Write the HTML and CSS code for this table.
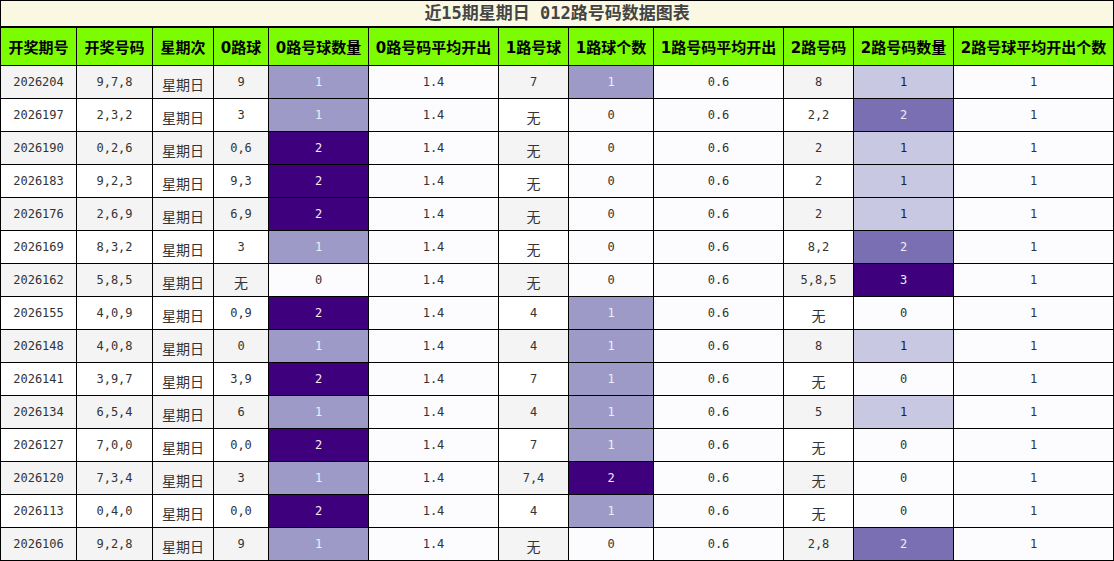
FILE: index.html
```html
<!DOCTYPE html>
<html lang="zh">
<head>
<meta charset="utf-8">
<title>近15期星期日 012路号码数据图表</title>
<link rel="stylesheet" href="styles.css">
</head>
<body>
<table class="chart">
  <colgroup>
    <col class="w76"><col class="w76"><col class="w61"><col class="w55"><col class="w100"><col class="w130"><col class="w70"><col class="w85"><col class="w130"><col class="w70"><col class="w100"><col class="w160">
  </colgroup>
  <thead>
    <tr class="title-row"><th colspan="12" class="title">近15期星期日 012路号码数据图表</th></tr>
    <tr class="head-row">
      <th>开奖期号</th><th>开奖号码</th><th>星期次</th><th>0路球</th><th>0路号球数量</th><th>0路号码平均开出</th><th>1路号球</th><th>1路球个数</th><th>1路号码平均开出</th><th>2路号码</th><th>2路号码数量</th><th>2路号球平均开出个数</th>
    </tr>
  </thead>
  <tbody>
    <tr><td>2026204</td><td>9,7,8</td><td class="cjk">星期日</td><td>9</td><td class="c2">1</td><td class="avg">1.4</td><td>7</td><td class="c2">1</td><td class="avg">0.6</td><td>8</td><td class="c1">1</td><td class="avg">1</td></tr>
    <tr><td>2026197</td><td>2,3,2</td><td class="cjk">星期日</td><td>3</td><td class="c2">1</td><td class="avg">1.4</td><td class="cjk">无</td><td class="avg">0</td><td class="avg">0.6</td><td>2,2</td><td class="c3">2</td><td class="avg">1</td></tr>
    <tr><td>2026190</td><td>0,2,6</td><td class="cjk">星期日</td><td>0,6</td><td class="c4">2</td><td class="avg">1.4</td><td class="cjk">无</td><td class="avg">0</td><td class="avg">0.6</td><td>2</td><td class="c1">1</td><td class="avg">1</td></tr>
    <tr><td>2026183</td><td>9,2,3</td><td class="cjk">星期日</td><td>9,3</td><td class="c4">2</td><td class="avg">1.4</td><td class="cjk">无</td><td class="avg">0</td><td class="avg">0.6</td><td>2</td><td class="c1">1</td><td class="avg">1</td></tr>
    <tr><td>2026176</td><td>2,6,9</td><td class="cjk">星期日</td><td>6,9</td><td class="c4">2</td><td class="avg">1.4</td><td class="cjk">无</td><td class="avg">0</td><td class="avg">0.6</td><td>2</td><td class="c1">1</td><td class="avg">1</td></tr>
    <tr><td>2026169</td><td>8,3,2</td><td class="cjk">星期日</td><td>3</td><td class="c2">1</td><td class="avg">1.4</td><td class="cjk">无</td><td class="avg">0</td><td class="avg">0.6</td><td>8,2</td><td class="c3">2</td><td class="avg">1</td></tr>
    <tr><td>2026162</td><td>5,8,5</td><td class="cjk">星期日</td><td class="cjk">无</td><td class="avg">0</td><td class="avg">1.4</td><td class="cjk">无</td><td class="avg">0</td><td class="avg">0.6</td><td>5,8,5</td><td class="c4">3</td><td class="avg">1</td></tr>
    <tr><td>2026155</td><td>4,0,9</td><td class="cjk">星期日</td><td>0,9</td><td class="c4">2</td><td class="avg">1.4</td><td>4</td><td class="c2">1</td><td class="avg">0.6</td><td class="cjk">无</td><td class="avg">0</td><td class="avg">1</td></tr>
    <tr><td>2026148</td><td>4,0,8</td><td class="cjk">星期日</td><td>0</td><td class="c2">1</td><td class="avg">1.4</td><td>4</td><td class="c2">1</td><td class="avg">0.6</td><td>8</td><td class="c1">1</td><td class="avg">1</td></tr>
    <tr><td>2026141</td><td>3,9,7</td><td class="cjk">星期日</td><td>3,9</td><td class="c4">2</td><td class="avg">1.4</td><td>7</td><td class="c2">1</td><td class="avg">0.6</td><td class="cjk">无</td><td class="avg">0</td><td class="avg">1</td></tr>
    <tr><td>2026134</td><td>6,5,4</td><td class="cjk">星期日</td><td>6</td><td class="c2">1</td><td class="avg">1.4</td><td>4</td><td class="c2">1</td><td class="avg">0.6</td><td>5</td><td class="c1">1</td><td class="avg">1</td></tr>
    <tr><td>2026127</td><td>7,0,0</td><td class="cjk">星期日</td><td>0,0</td><td class="c4">2</td><td class="avg">1.4</td><td>7</td><td class="c2">1</td><td class="avg">0.6</td><td class="cjk">无</td><td class="avg">0</td><td class="avg">1</td></tr>
    <tr><td>2026120</td><td>7,3,4</td><td class="cjk">星期日</td><td>3</td><td class="c2">1</td><td class="avg">1.4</td><td>7,4</td><td class="c4">2</td><td class="avg">0.6</td><td class="cjk">无</td><td class="avg">0</td><td class="avg">1</td></tr>
    <tr><td>2026113</td><td>0,4,0</td><td class="cjk">星期日</td><td>0,0</td><td class="c4">2</td><td class="avg">1.4</td><td>4</td><td class="c2">1</td><td class="avg">0.6</td><td class="cjk">无</td><td class="avg">0</td><td class="avg">1</td></tr>
    <tr><td>2026106</td><td>9,2,8</td><td class="cjk">星期日</td><td>9</td><td class="c2">1</td><td class="avg">1.4</td><td class="cjk">无</td><td class="avg">0</td><td class="avg">0.6</td><td>2,8</td><td class="c3">2</td><td class="avg">1</td></tr>
  </tbody>
</table>
</body>
</html>
```

FILE: styles.css
```css
html, body {
  margin: 0;
  padding: 0;
  background: #ffffff;
}

.chart {
  border-collapse: collapse;
  table-layout: fixed;
  width: 1114px;
  font-family: "DejaVu Sans Mono", "Noto Sans CJK SC", monospace;
  font-size: 12px;
  color: #333333;
}

.w76 { width: 76px; }
.w61 { width: 61px; }
.w55 { width: 55px; }
.w100 { width: 100px; }
.w130 { width: 130px; }
.w70 { width: 70px; }
.w85 { width: 85px; }
.w160 { width: 160px; }

.chart th,
.chart td {
  border: 1px solid #000000;
  padding: 0;
  text-align: center;
  white-space: nowrap;
  overflow: hidden;
}

.title {
  background: #faf8e2;
  color: #444444;
  font-family: "DejaVu Sans Mono", "Noto Sans CJK SC", monospace;
  font-size: 17px;
  font-weight: bold;
  height: 25px;
  line-height: 25px;
  border-bottom: 2px solid #000000 !important;
}

.head-row th {
  background: #7cfc00;
  color: #000000;
  font-family: "DejaVu Sans", "Noto Sans CJK SC", sans-serif;
  font-size: 15px;
  font-weight: bold;
  height: 37px;
}

.chart tbody td {
  height: 32px;
  background: #ffffff;
}

.chart tbody tr:nth-child(odd) td {
  background: #f4f4f4;
}

.chart tbody td.cjk {
  font-family: "Noto Sans CJK SC", sans-serif;
  font-size: 14px;
  padding-top: 3px;
  height: 29px;
}

.chart tbody tr td.avg {
  background: #fcfcfe;
}

.chart tbody tr td.c1 {
  background: #c8c8e2;
  color: #222222;
}

.chart tbody tr td.c2 {
  background: #9e9ac8;
  color: #eeeeee;
}

.chart tbody tr td.c3 {
  background: #7a6fb3;
  color: #eeeeee;
}

.chart tbody tr td.c4 {
  background: #3f007d;
  color: #eeeeee;
}
```
